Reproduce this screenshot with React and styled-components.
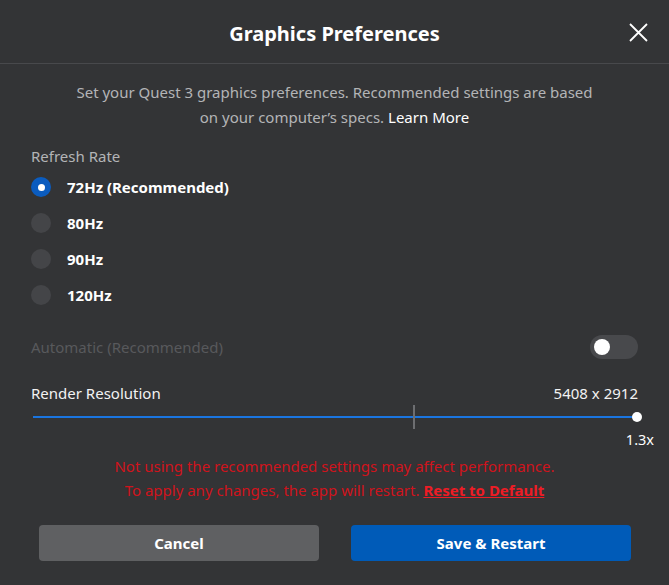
import React, { useState } from 'react'
import styled, { createGlobalStyle } from 'styled-components'

const GlobalStyle = createGlobalStyle`
  html, body {
    margin: 0;
    padding: 0;
    background: #333436;
  }
  body {
    font-family: "Noto Sans", "Liberation Sans", sans-serif;
  }
`

const Dialog = styled.div`
  width: 669px;
  height: 585px;
  background: #333436;
  color: #fff;
  display: flex;
  flex-direction: column;
`

const Header = styled.div`
  height: 64px;
  box-sizing: border-box;
  border-bottom: 1px solid #48494c;
  display: flex;
  align-items: center;
  justify-content: center;
  position: relative;
`

const Title = styled.h1`
  margin: 0;
  font-size: 20px;
  font-weight: 700;
  padding-top: 3px;
`

const CloseButton = styled.button`
  position: absolute;
  right: 20px;
  top: 22px;
  width: 21px;
  height: 21px;
  padding: 0;
  border: none;
  background: none;
  cursor: pointer;
  display: flex;
`

const Body = styled.div`
  padding: 0 31px;
  display: flex;
  flex-direction: column;
`

const Intro = styled.p`
  margin: 16px 0 0;
  text-align: center;
  font-size: 15px;
  line-height: 25px;
  color: #b3b4b6;

  & a {
    color: #fff;
    text-decoration: none;
  }
`

const SectionLabel = styled.div`
  margin-top: 16px;
  font-size: 15px;
  color: #b3b4b6;
  line-height: 20px;
`

const RadioList = styled.div`
  margin-top: 11px;
  display: flex;
  flex-direction: column;
  gap: 16px;
`

const RadioRow = styled.label`
  display: flex;
  align-items: center;
  gap: 16px;
  height: 20px;
  font-size: 15px;
  font-weight: 700;
  cursor: pointer;
`

const RadioDot = styled.span`
  width: 20px;
  height: 20px;
  border-radius: 50%;
  box-sizing: border-box;
  background: ${(p) => (p.$checked ? '#0b5cbf' : '#444548')};
  display: flex;
  align-items: center;
  justify-content: center;

  &::after {
    content: '';
    width: 7px;
    height: 7px;
    border-radius: 50%;
    background: #fff;
    display: ${(p) => (p.$checked ? 'block' : 'none')};
  }
`

const SettingRow = styled.div`
  display: flex;
  align-items: center;
  justify-content: space-between;
  font-size: 15px;
  line-height: 20px;
  color: ${(p) => (p.$dim ? '#58595c' : '#f2f2f2')};
`

const AutoRow = styled(SettingRow)`
  margin-top: 30px;
`

const Toggle = styled.span`
  width: 48px;
  height: 24px;
  border-radius: 12px;
  background: #48494c;
  display: flex;
  align-items: center;
  padding: 0 4px;
  box-sizing: border-box;

  &::before {
    content: '';
    width: 16px;
    height: 16px;
    border-radius: 50%;
    background: #fff;
  }
`

const ResolutionRow = styled(SettingRow)`
  margin-top: 24px;
`

const Slider = styled.div`
  margin-top: 2px;
  height: 24px;
  position: relative;
  display: flex;
  align-items: center;
  padding: 0 2px;
`

const Track = styled.div`
  flex: 1;
  height: 2px;
  background: #1a75e0;
`

const Tick = styled.span`
  position: absolute;
  left: ${(p) => p.$at};
  top: 0;
  width: 2px;
  height: 24px;
  background: #6d6e71;
`

const Thumb = styled.span`
  position: absolute;
  right: -4px;
  top: 7px;
  width: 10px;
  height: 10px;
  border-radius: 50%;
  background: #fff;
`

const Scale = styled.div`
  text-align: right;
  margin-right: -16px;
  font-size: 14.5px;
  line-height: 20px;
`

const Warning = styled.p`
  margin: 5px 0 0;
  text-align: center;
  font-size: 15px;
  line-height: 24px;
  color: #d0131c;

  & a {
    color: #ee1c25;
    font-weight: 700;
    text-decoration: underline;
  }
`

const Footer = styled.div`
  margin-top: 23px;
  padding: 0 38px 0 39px;
  display: grid;
  grid-template-columns: 1fr 1fr;
  gap: 32px;
`

const Button = styled.button`
  height: 36px;
  border: none;
  border-radius: 4px;
  font-family: inherit;
  font-size: 15px;
  font-weight: 700;
  color: #fff;
  background: ${(p) => (p.$primary ? '#005bb8' : '#5f6062')};
  cursor: pointer;
`

const rates = ['72Hz (Recommended)', '80Hz', '90Hz', '120Hz']

export default function App() {
  const [rate, setRate] = useState(0)
  return (
    <Dialog>
      <GlobalStyle />
      <Header>
        <Title>Graphics Preferences</Title>
        <CloseButton aria-label="Close">
          <svg width="21" height="21" viewBox="0 0 21 21">
            <path d="M2 2L19 19M19 2L2 19" stroke="#fff" strokeWidth="1.8" />
          </svg>
        </CloseButton>
      </Header>
      <Body>
        <Intro>
          Set your Quest 3 graphics preferences. Recommended settings are based
          <br />
          on your computer’s specs. <a href="#">Learn More</a>
        </Intro>
        <SectionLabel>Refresh Rate</SectionLabel>
        <RadioList>
          {rates.map((r, i) => (
            <RadioRow key={r} onClick={() => setRate(i)}>
              <RadioDot $checked={rate === i} />
              {r}
            </RadioRow>
          ))}
        </RadioList>
        <AutoRow $dim>
          Automatic (Recommended)
          <Toggle />
        </AutoRow>
        <ResolutionRow>
          Render Resolution
          <span>5408 x 2912</span>
        </ResolutionRow>
        <Slider>
          <Track />
          <Tick $at="382px" />
          <Thumb />
        </Slider>
        <Scale>1.3x</Scale>
        <Warning>
          Not using the recommended settings may affect performance.
          <br />
          To apply any changes, the app will restart. <a href="#">Reset to Default</a>
        </Warning>
      </Body>
      <Footer>
        <Button>Cancel</Button>
        <Button $primary>Save &amp; Restart</Button>
      </Footer>
    </Dialog>
  )
}
